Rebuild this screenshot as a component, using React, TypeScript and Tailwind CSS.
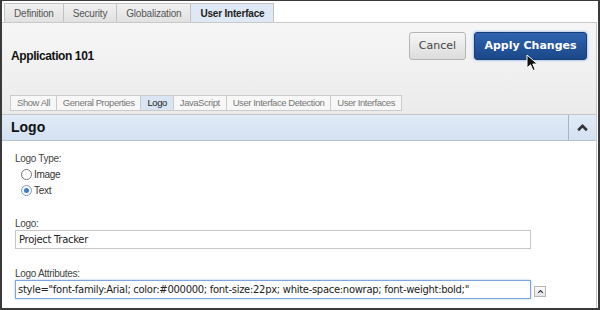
import React from "react";

const topTabs = ["Definition", "Security", "Globalization", "User Interface"];
const subTabs = [
  "Show All",
  "General Properties",
  "Logo",
  "JavaScript",
  "User Interface Detection",
  "User Interfaces",
];

const ChevronUp: React.FC<{ size?: number; w?: number }> = ({ size = 12, w = 2 }) => (
  <svg width={size} height={size} viewBox="0 0 12 12">
    <path d="M2 8.5 L6 4.5 L10 8.5" fill="none" stroke="#333" strokeWidth={w} />
  </svg>
);

const App: React.FC = () => {
  return (
    <div
      className="w-[600px] h-[310px] overflow-hidden bg-white border-t border-l-2 border-r-2 border-b-2 border-[#3a3a3a] flex flex-col"
      style={{ fontFamily: '"Liberation Sans", Arial, sans-serif' }}
    >
      {/* top tabs */}
      <div className="flex pl-[2px] pt-[2px] h-[21px] shrink-0">
        {topTabs.map((t) => {
          const active = t === "User Interface";
          return (
            <div
              key={t}
              className={`px-[9px] flex items-center text-[10px] tracking-[-0.2px] border border-b-0 border-[#c2c2c2] -ml-px first:ml-0 ${
                active
                  ? "bg-[#dfe9f5] text-[#222] font-bold"
                  : "bg-gradient-to-b from-[#f1f1f1] to-[#e1e1e1] text-[#555]"
              }`}
            >
              {t}
            </div>
          );
        })}
      </div>

      {/* page panel */}
      <div className="flex-1 flex flex-col border-t border-r border-[#c8c8c8] mr-px">
        <div className="h-[92px] shrink-0 bg-gradient-to-b from-[#f6f6f6] to-[#ebebeb] border-b border-[#c6c6c6] px-[7px] pt-[9px]">
          <div className="flex items-start justify-between">
            <div className="mt-[17px] pl-[2px] text-[12px] leading-[14px] tracking-[-0.4px] font-bold text-[#111]">
              Application 101
            </div>
            <div
              className="flex gap-[8px] pr-[2px]"
              style={{ fontFamily: '"DejaVu Sans", sans-serif' }}
            >
              <button className="h-[28px] w-[57px] rounded-[3px] border border-[#b5b5b5] bg-gradient-to-b from-[#f6f6f6] to-[#dcdcdc] text-[11px] text-[#444]">
                Cancel
              </button>
              <button className="relative h-[28px] w-[113px] rounded-[3px] border border-[#173d78] bg-gradient-to-b from-[#2f64b0] to-[#1a4889] text-[11px] font-bold text-white shadow-[0_0_3px_#7aa7e0]">
                Apply Changes
                <svg
                  className="absolute left-[51px] top-[21px]"
                  width="13"
                  height="18"
                  viewBox="0 0 13 18"
                >
                  <path
                    d="M1 1 L1 14 L4.5 10.8 L7 16.5 L9.2 15.5 L6.8 10 L11.5 10 Z"
                    fill="#111"
                    stroke="#fff"
                    strokeWidth="1"
                  />
                </svg>
              </button>
            </div>
          </div>
          <div className="flex mt-[32px] h-[16px] pl-[1px]">
            {subTabs.map((t) => {
              const active = t === "Logo";
              return (
                <div
                  key={t}
                  className={`px-[6px] flex items-center text-[9.5px] tracking-[-0.45px] border border-[#cbcbcb] -ml-px first:ml-0 ${
                    active ? "bg-[#d9e5f3] text-[#222]" : "bg-[#f7f7f7] text-[#777]"
                  }`}
                >
                  {t}
                </div>
              );
            })}
          </div>
        </div>

        {/* region header */}
        <div className="flex h-[26px] shrink-0 bg-gradient-to-b from-[#e2ebf7] to-[#d3e1f2] border-b border-[#b8c4d2]">
          <div className="flex-1 flex items-center pl-[9px] text-[14px] font-bold text-[#111]">
            Logo
          </div>
          <div className="w-[28px] border-l border-[#aab4c0] flex items-center justify-center">
            <ChevronUp size={13} w={2.4} />
          </div>
        </div>

        {/* content */}
        <div className="flex-1 pl-[13px] pt-[12px] text-[10px] tracking-[-0.3px] text-[#444]">
          <div className="h-[11px] leading-[11px]">Logo Type:</div>
          <div className="flex flex-col mt-[2px] pl-[6px]">
            <label className="h-[16px] flex items-center gap-[2px] text-[#333]">
              <span className="w-[11px] h-[11px] rounded-full border border-[#7a7a7a] bg-white" />
              Image
            </label>
            <label className="h-[16px] flex items-center gap-[2px] text-[#333]">
              <span className="w-[11px] h-[11px] rounded-full border border-[#7f9cc4] bg-white flex items-center justify-center">
                <span className="w-[5px] h-[5px] rounded-full bg-[#3d7bd1]" />
              </span>
              Text
            </label>
          </div>

          <div className="mt-[20px] h-[11px] leading-[11px]">Logo:</div>
          <div
            className="mt-[1px] w-[516px] h-[19px] border border-[#c6c6c6] bg-white flex items-center px-[3px] text-[10px] tracking-[-0.3px] text-[#222]"
            style={{ fontFamily: '"DejaVu Sans", sans-serif' }}
          >
            Project Tracker
          </div>

          <div className="mt-[19px] h-[11px] leading-[11px]">Logo Attributes:</div>
          <div className="flex items-end gap-[3px] mt-[1px]">
            <div
              className="w-[516px] h-[19px] border border-[#7ca6dc] bg-white flex items-center px-[2px] text-[10px] tracking-[-0.3px] text-[#222] whitespace-nowrap overflow-hidden shadow-[0_0_2px_#a9c6ec]"
              style={{ fontFamily: '"DejaVu Sans", sans-serif' }}
            >
              style="font-family:Arial; color:#000000; font-size:22px; white-space:nowrap; font-weight:bold;"
            </div>
            <div className="mb-[2px] w-[12px] h-[11px] border border-[#b5b5b5] bg-gradient-to-b from-[#fafafa] to-[#e4e4e4] flex items-center justify-center">
              <ChevronUp size={7} />
            </div>
          </div>
        </div>
      </div>
    </div>
  );
};

export default App;
